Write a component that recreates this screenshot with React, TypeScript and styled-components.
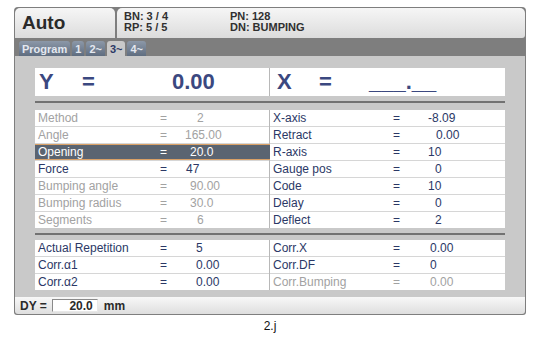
import React from 'react';
import styled, { createGlobalStyle } from 'styled-components';

const GlobalStyle = createGlobalStyle`
  html, body {
    margin: 0;
    padding: 0;
    background: #ffffff;
    font-family: 'Liberation Sans', Arial, sans-serif;
  }
`;

const Page = styled.div`
  width: 541px;
  height: 342px;
  padding: 7px 0 0 14px;
  box-sizing: border-box;
`;

const Frame = styled.div`
  width: 512px;
  background: #7e7e7e;
  padding: 1px;
  box-sizing: border-box;
  border-radius: 4px 4px 3px 3px;
`;

const Header = styled.div`
  display: flex;
  gap: 2px;
  height: 30px;
`;

const ModeBox = styled.div`
  width: 100px;
  display: flex;
  align-items: center;
  padding-left: 7px;
  box-sizing: border-box;
  background: linear-gradient(#f6f6f6, #dcdcdc);
  border-radius: 5px 5px 0 0;
  font-size: 19px;
  font-weight: bold;
  color: #2a2a2a;
`;

const InfoBox = styled.div`
  flex: 1;
  display: flex;
  padding: 3px 0 0 7px;
  box-sizing: border-box;
  background: linear-gradient(#f6f6f6, #dcdcdc);
  border-radius: 5px 5px 3px 0;
`;

const InfoCol = styled.div<{ $w: number }>`
  width: ${(p) => p.$w}px;
  font-size: 11px;
  font-weight: bold;
  line-height: 11px;
  color: #303030;
`;

const TabBar = styled.div`
  height: 18px;
  display: flex;
  align-items: flex-end;
  gap: 2px;
  padding-left: 4px;
`;

const Tab = styled.div<{ $active?: boolean }>`
  height: 15px;
  padding: 0 3px;
  display: flex;
  align-items: center;
  font-size: 11px;
  font-weight: bold;
  border-radius: 3px 3px 0 0;
  color: ${(p) => (p.$active ? '#2c3a66' : '#e4e8f0')};
  background: ${(p) =>
    p.$active ? '#c9c9c9' : 'linear-gradient(#8c98a8, #5f6d80)'};
`;

const Content = styled.div`
  background: #c9c9c9;
  padding: 12px 20px 7px 20px;
  height: 241px;
  box-sizing: border-box;
  display: flex;
  flex-direction: column;
`;

const ValueBar = styled.div`
  height: 28px;
  background: #ffffff;
  display: grid;
  grid-template-columns: 235px 235px;
`;

const ValueCell = styled.div<{ $divider?: boolean }>`
  position: relative;
  border-right: ${(p) => (p.$divider ? '1px solid #b8b8b8' : 'none')};
  color: #3b4880;
  font-size: 22px;
  font-weight: bold;
`;

const BigText = styled.span<{ $x: number }>`
  position: absolute;
  left: ${(p) => p.$x}px;
  top: 3px;
  line-height: 22px;
`;

const Rule = styled.div<{ $top: number; $bottom: number }>`
  height: 2px;
  background: #727272;
  margin: ${(p) => p.$top}px 0 ${(p) => p.$bottom}px 0;
`;

const Tables = styled.div`
  display: grid;
  grid-template-columns: 235px 235px;
`;

const Table = styled.div<{ $divider?: boolean }>`
  display: flex;
  flex-direction: column;
  gap: 1px;
  background: #d6d6d6;
  border-right: ${(p) => (p.$divider ? '1px solid #b8b8b8' : 'none')};
`;

const Row = styled.div<{ $dim?: boolean; $selected?: boolean; $eq: number; $val: number }>`
  height: 16px;
  box-sizing: border-box;
  display: grid;
  grid-template-columns: ${(p) => `${p.$eq}px ${p.$val - p.$eq}px 1fr`};
  align-items: center;
  padding-left: 3px;
  font-size: 12px;
  line-height: 14px;
  white-space: nowrap;
  background: ${(p) => (p.$selected ? '#5a6471' : '#ffffff')};
  color: ${(p) => (p.$selected ? '#ffffff' : p.$dim ? '#a2a2a2' : '#2b3866')};
  border-top: ${(p) => (p.$selected ? '1px solid #d9a066' : 'none')};
  border-bottom: ${(p) => (p.$selected ? '1px solid #d9a066' : 'none')};
  margin-right: ${(p) => (p.$selected ? '-2px' : '0')};
  position: relative;
`;

const Val = styled.span<{ $indent: number }>`
  padding-left: ${(p) => p.$indent}px;
`;

const BottomBar = styled.div`
  height: 17px;
  display: flex;
  align-items: center;
  padding-left: 5px;
  background: linear-gradient(#f8f8f8, #dedede);
  border-radius: 0 0 3px 3px;
  font-size: 12px;
  font-weight: bold;
  color: #2a2a2a;
`;

const InputBox = styled.div`
  width: 46px;
  height: 13px;
  margin: 0 6px 0 5px;
  background: #ffffff;
  border-top: 1px solid #8a8a8a;
  border-left: 1px solid #8a8a8a;
  border-bottom: 1px solid #e8e8e8;
  border-right: 1px solid #e8e8e8;
  box-sizing: border-box;
  text-align: right;
  padding-right: 4px;
  line-height: 12px;
`;

const Caption = styled.div`
  width: 512px;
  text-align: center;
  margin-top: 4px;
  font-size: 12px;
  color: #111;
`;

type Item = { label: string; value: string; indent: number; dim?: boolean; selected?: boolean };

const leftTop: Item[] = [
  { label: 'Method', value: '2', indent: 12, dim: true },
  { label: 'Angle', value: '165.00', indent: 0, dim: true },
  { label: 'Opening', value: '20.0', indent: 5, selected: true },
  { label: 'Force', value: '47', indent: 1 },
  { label: 'Bumping angle', value: '90.00', indent: 5, dim: true },
  { label: 'Bumping radius', value: '30.0', indent: 5, dim: true },
  { label: 'Segments', value: '6', indent: 12, dim: true },
];

const rightTop: Item[] = [
  { label: 'X-axis', value: '-8.09', indent: 0 },
  { label: 'Retract', value: '0.00', indent: 8 },
  { label: 'R-axis', value: '10', indent: 0 },
  { label: 'Gauge pos', value: '0', indent: 7 },
  { label: 'Code', value: '10', indent: 0 },
  { label: 'Delay', value: '0', indent: 7 },
  { label: 'Deflect', value: '2', indent: 7 },
];

const leftBottom: Item[] = [
  { label: 'Actual Repetition', value: '5', indent: 0 },
  { label: 'Corr.\u03b11', value: '0.00', indent: 0 },
  { label: 'Corr.\u03b12', value: '0.00', indent: 0 },
];

const rightBottom: Item[] = [
  { label: 'Corr.X', value: '0.00', indent: 0 },
  { label: 'Corr.DF', value: '0', indent: 0 },
  { label: 'Corr.Bumping', value: '0.00', indent: 0, dim: true },
];

const ParamTable: React.FC<{ items: Item[]; eq: number; val: number; divider?: boolean }> = ({
  items,
  eq,
  val,
  divider,
}) => (
  <Table $divider={divider}>
    {items.map((it) => (
      <Row key={it.label} $dim={it.dim} $selected={it.selected} $eq={eq} $val={val}>
        <span>{it.label}</span>
        <span>=</span>
        <Val $indent={it.indent}>{it.value}</Val>
      </Row>
    ))}
  </Table>
);

const App: React.FC = () => (
  <>
    <GlobalStyle />
    <Page>
      <Frame>
        <Header>
          <ModeBox>Auto</ModeBox>
          <InfoBox>
            <InfoCol $w={106}>
              BN: 3 / 4
              <br />
              RP: 5 / 5
            </InfoCol>
            <InfoCol $w={200}>
              PN: 128
              <br />
              DN: BUMPING
            </InfoCol>
          </InfoBox>
        </Header>
        <TabBar>
          <Tab>Program</Tab>
          <Tab>1</Tab>
          <Tab>2~</Tab>
          <Tab $active>3~</Tab>
          <Tab>4~</Tab>
        </TabBar>
        <Content>
          <ValueBar>
            <ValueCell $divider>
              <BigText $x={4}>Y</BigText>
              <BigText $x={47}>=</BigText>
              <BigText $x={137}>0.00</BigText>
            </ValueCell>
            <ValueCell>
              <BigText $x={7}>X</BigText>
              <BigText $x={49}>=</BigText>
              <BigText $x={99}>___.__</BigText>
            </ValueCell>
          </ValueBar>
          <Rule $top={5} $bottom={7} />
          <Tables>
            <ParamTable items={leftTop} eq={122} val={147} divider />
            <ParamTable items={rightTop} eq={120} val={155} />
          </Tables>
          <Rule $top={5} $bottom={5} />
          <Tables>
            <ParamTable items={leftBottom} eq={122} val={158} divider />
            <ParamTable items={rightBottom} eq={120} val={157} />
          </Tables>
        </Content>
        <BottomBar>
          DY =<InputBox>20.0</InputBox>mm
        </BottomBar>
      </Frame>
      <Caption>2.j</Caption>
    </Page>
  </>
);

export default App;
